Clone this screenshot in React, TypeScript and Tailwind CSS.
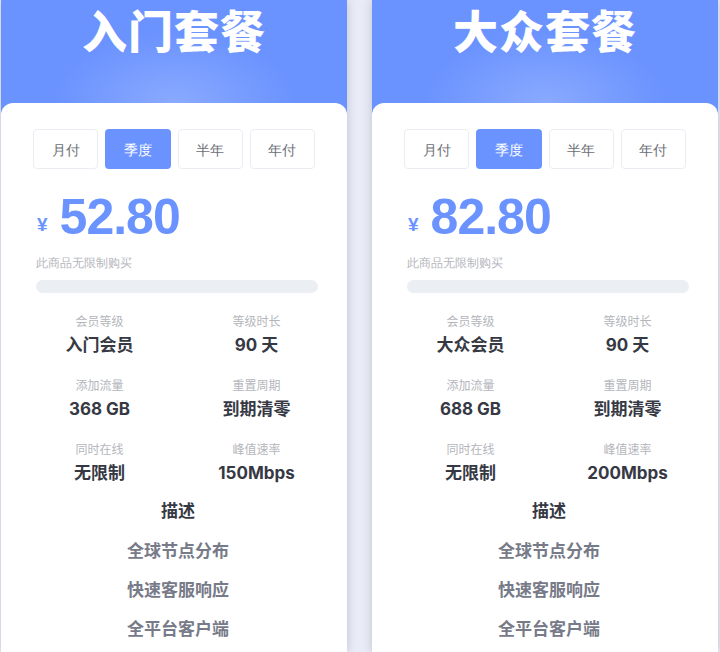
import React from "react"

type Plan = {
  title: string
  price: string
  level: string
  traffic: string
  speed: string
}

const plans: Plan[] = [
  { title: "入门套餐", price: "52.80", level: "入门会员", traffic: "368 GB", speed: "150Mbps" },
  { title: "大众套餐", price: "82.80", level: "大众会员", traffic: "688 GB", speed: "200Mbps" },
]

const periods = ["月付", "季度", "半年", "年付"]
const features = ["全球节点分布", "快速客服响应", "全平台客户端"]

const cjk = "font-['Inter','Noto_Sans_CJK_SC',sans-serif]"

function Stat({ label, value }: { label: string; value: string }) {
  return (
    <div className="flex flex-col items-center">
      <span className="text-[12px] leading-[16px] text-[#b4b6bc]">{label}</span>
      <span className="mt-[3px] text-[17px] leading-[24px] font-bold text-[#363944]">{value}</span>
    </div>
  )
}

function PlanCard({ plan }: { plan: Plan }) {
  return (
    <div className="w-[346px] shrink-0 bg-[#6b93ff] shadow-[0_0_9px_rgba(40,45,80,0.22)]">
      {/* Header */}
      <div className="h-[103px] bg-[radial-gradient(ellipse_120px_70px_at_50%_100%,#8aaaff,#6b93ff)] flex justify-center">
        <h2 className="pt-[7px] text-[45px] leading-none font-black text-white tracking-[1px] font-['Noto_Sans_CJK_SC',sans-serif]">
          {plan.title}
        </h2>
      </div>

      {/* Body */}
      <div className="bg-white rounded-t-[12px] pt-[26px] pb-6">
        <div className="px-8 grid grid-cols-4 gap-[7px]">
          {periods.map((p) => (
            <div
              key={p}
              className={
                p === "季度"
                  ? "h-10 rounded-[4px] bg-[#6b93ff] text-white text-[14px] flex items-center justify-center"
                  : "h-10 rounded-[4px] border border-[#ebedf2] text-[#6b6e76] text-[14px] flex items-center justify-center"
              }
            >
              {p}
            </div>
          ))}
        </div>

        <div className="pl-9 mt-[20px] flex items-end text-[#6b93ff]">
          <span className="text-[19px] leading-[20px] font-bold mb-[10px] font-['Liberation_Sans','Noto_Sans_CJK_SC',sans-serif]">¥</span>
          <span className="ml-[12px] text-[50px] leading-[56px] font-bold tracking-[-1px] font-['Liberation_Sans',sans-serif]">
            {plan.price}
          </span>
        </div>

        <p className="px-[35px] mt-[10px] text-[12px] leading-[16px] text-[#b4b6bc]">此商品无限制购买</p>

        <div className="ml-[35px] mr-[29px] mt-[9px] h-[13px] rounded-full bg-[#ebeef3]" />

        <div className={`ml-[20px] mt-[21px] grid grid-cols-[157px_157px] gap-y-[21px] ${cjk}`}>
          <Stat label="会员等级" value={plan.level} />
          <Stat label="等级时长" value="90 天" />
          <Stat label="添加流量" value={plan.traffic} />
          <Stat label="重置周期" value="到期清零" />
          <Stat label="同时在线" value="无限制" />
          <Stat label="峰值速率" value={plan.speed} />
        </div>

        <div className={`ml-[20px] w-[314px] mt-[14px] flex flex-col items-center ${cjk}`}>
          <span className="text-[17px] leading-[24px] font-bold text-[#363944]">描述</span>
          {features.map((f, i) => (
            <span
              key={f}
              className={
                i === 0
                  ? "mt-[16px] text-[17px] leading-[24px] font-bold text-[#777a88]"
                  : "mt-[15px] text-[17px] leading-[24px] font-bold text-[#777a88]"
              }
            >
              {f}
            </span>
          ))}
        </div>
      </div>
    </div>
  )
}

export default function App() {
  return (
    <div className="h-[652px] overflow-hidden bg-[#e9ecf6] flex gap-[25px] pl-px">
      {plans.map((p) => (
        <PlanCard key={p.title} plan={p} />
      ))}
    </div>
  )
}
